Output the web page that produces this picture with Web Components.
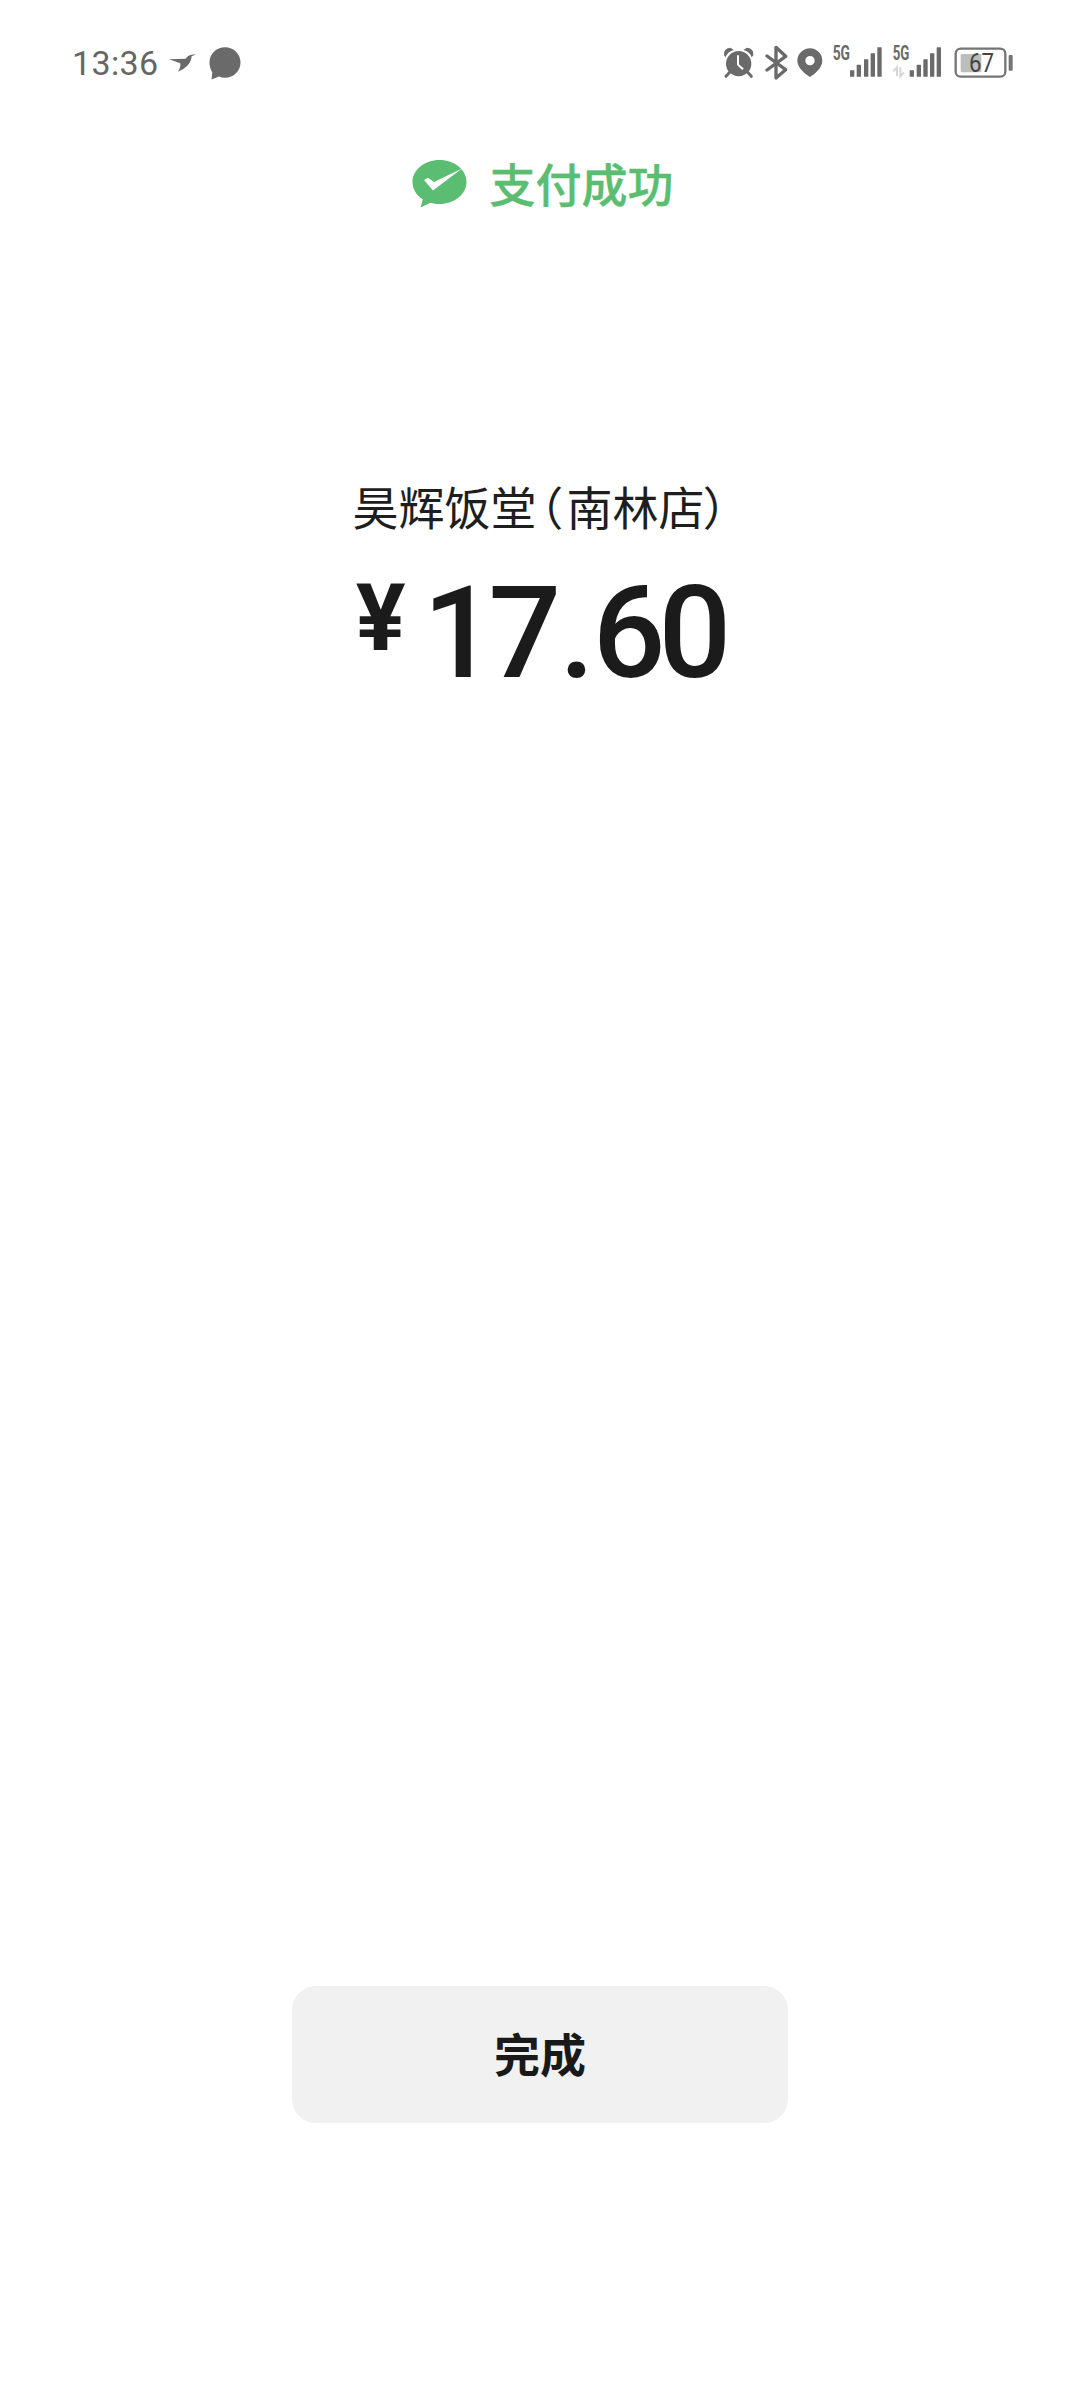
<!DOCTYPE html>
<html lang="zh"><head><meta charset="utf-8"><title>支付成功</title>
<style>html,body{margin:0;padding:0;background:#fff}body{width:1080px;height:2382px;overflow:hidden;font-family:"Noto Sans CJK SC","Noto Sans",sans-serif}</style>
</head><body>
<pay-page>
  <status-bar slot="status"></status-bar>
  <pay-title slot="title">支付成功</pay-title>
  <pay-amount slot="amount" merchant="昊辉饭堂" branch="南林店" whole="17" cents="60"></pay-amount>
  <done-button slot="action">完成</done-button>
</pay-page>
<script>
function def(name, html, init){
  customElements.define(name, class extends HTMLElement{
    constructor(){super();this.attachShadow({mode:'open'}).innerHTML=html;}
    connectedCallback(){ if(init) init(this); }
  });
}
def('pay-page',`<style>:host{display:flex;flex-direction:column;width:1080px;height:2382px;background:#fff}
.grow{flex:1}</style>
<slot name="status"></slot><slot name="title"></slot><slot name="amount"></slot><div class="grow"></div><slot name="action"></slot>`);

const ic=(x0,w,body)=>`<svg width="${w/3}" height="46" viewBox="${x0} 30 ${w} 138" fill="#6a6a6a">${body}</svg>`;
const bars=(xs,ys)=>xs.map((x,i)=>`<rect x="${x}" y="${ys[i]}" width="13" height="${140-ys[i]}" rx="1.5"/>`).join('');
def('status-bar',`<style>:host{display:flex;align-items:center;height:36px;margin-top:45px;padding:0 66px 0 72px;color:#666}
.time{font:400 34px/36px Roboto,sans-serif;width:85.5px;letter-spacing:.35px;color:#666;white-space:nowrap}
svg{display:block;flex:none}
.bird{margin-left:11px}.bub{margin-left:10px}
.sp{flex:1}
</style>
<span class="time">13:36</span>
<svg class="bird" width="30" height="36" viewBox="0 0 90 108" fill="#6a6a6a"><path d="M0 43Q30 42 50 41Q56 30 68 29L82 28L68 34Q66 52 54 63Q42 75 27 80Q36 66 34 55Q20 50 0 43Z"/></svg>
<svg class="bub" width="32" height="36" viewBox="0 0 32 36" fill="#6a6a6a"><path d="M16 2.300C24.700 2.300 31.500 9 31.500 17.500C31.500 26 24.700 32.800 16 32.800C13.800 32.800 11.900 32.400 10 31.600L2.500 34.400L3.300 27.200C1.500 24.700.5 21.300.5 17.500C.5 9 7.300 2.300 16 2.300Z"/></svg>
<div class="sp"></div>
${ic(68,96,`<circle cx="115" cy="101" r="38"/><path d="M71 76Q68 56 90 53L101 60Q82 64 76 82ZM159 76Q162 56 140 53L129 60Q148 64 154 82Z"/><path d="M88 127L77 139M142 127L153 139" stroke="#6a6a6a" stroke-width="9" stroke-linecap="round"/><path d="M113 76V104L128 118" fill="none" stroke="#fff" stroke-width="6"/>`)}
<div style="width:10px"></div>
${ic(196,70,`<path d="M202 78L258 119L229 144V52L258 79L202 120" fill="none" stroke="#6a6a6a" stroke-width="10" stroke-linejoin="round" stroke-linecap="round"/>`)}
<div style="width:9px"></div>
${ic(294,78,`<path fill-rule="evenodd" d="M333 55C354 55 370 72 370 92C370 112 350 130 333 141C316 130 295 112 295 92C295 72 312 55 333 55ZM333 78A14 14 0 1 0 333 106A14 14 0 1 0 333 78Z"/>`)}
<div style="width:8.700px"></div>
${ic(396,152,`<text x="398" y="90" font-family="Roboto,sans-serif" font-weight="700" font-size="58" textLength="52" lengthAdjust="spacingAndGlyphs">5G</text>`+bars([450,470,492,512,532],[121,104,88,70,52]))}
<div style="width:9.500px"></div>
${ic(575,150,`<text x="577" y="90" font-family="Roboto,sans-serif" font-weight="700" font-size="58" textLength="50" lengthAdjust="spacingAndGlyphs">5G</text><path d="M590 139V112L579 124M600 112V139L611 127" fill="none" stroke="#d6d6d6" stroke-width="6"/>`+bars([628,649,669,689,709],[121,104,88,70,52]))}
<div style="width:12px"></div>
${ic(758,180,`<rect x="778" y="72" width="62" height="55" rx="4" fill="#bdbdbd"/><rect x="763" y="56" width="149" height="84" rx="15" fill="none" stroke="#757575" stroke-width="7"/><rect x="922" y="75" width="12" height="47" rx="3" fill="#757575"/><text x="803" y="127" font-family="Roboto,sans-serif" font-weight="400" font-size="78" fill="#444" textLength="75" lengthAdjust="spacingAndGlyphs">67</text>`)}
`);

def('pay-title',`<style>:host{display:flex;justify-content:center;align-items:center;gap:23px;margin-top:73px;height:56px;padding-left:5px;
font:500 46px/56px "Noto Sans CJK SC",sans-serif;color:#5bbd72;-webkit-text-stroke:.4px #5bbd72}
svg{display:block;flex:none}</style>
<svg width="55" height="52" viewBox="0 0 55 52" style="margin-top:6px"><path fill="#5bbd72" d="M27.500 1C42.500 1 54.500 10.800 54.500 23C54.500 35.200 42.500 45 27.500 45C24.300 45 21.300 44.600 18.500 43.700L8.600 48.500L10.700 40.300C4.500 36.300.5 30 .5 23C.5 10.800 12.500 1 27.500 1Z"/><path fill="#fff" d="M12 21L16 18.700L22 23L50 9.500L21 31.500Z"/></svg>
<span><slot></slot></span>`);

def('pay-amount',`<style>:host{display:block;color:#1b1b1b;font-family:"Noto Sans CJK SC",sans-serif}
.m{display:flex;justify-content:center;margin-top:265px;height:60px;font-size:46px;line-height:60px;font-weight:400;color:#1e1e1e}
.p{font-feature-settings:"palt" 1}
.p1{margin-left:2px;margin-right:5px}.p2{margin-left:0}
.a{display:flex;justify-content:center;align-items:flex-start;margin-top:38px;height:120px;font-family:Roboto,sans-serif;color:#1b1b1b}
.y{font-size:93px;line-height:90px;font-weight:700;margin-top:1px;margin-right:17px}
.n{font-size:128px;line-height:120px;font-weight:500;letter-spacing:-7px}
.d{margin:0 5px}</style>
<div class="m"><span id="mn"></span><span class="p p1">（</span><span id="br"></span><span class="p p2">）</span></div>
<div class="a"><span class="y">¥</span><span class="n"><span id="w"></span><span class="d">.</span><span id="c"></span></span></div>`,
 el=>{const s=el.shadowRoot;s.getElementById('mn').textContent=el.getAttribute('merchant');s.getElementById('br').textContent=el.getAttribute('branch');s.getElementById('w').textContent=el.getAttribute('whole');s.getElementById('c').textContent=el.getAttribute('cents');});

def('done-button',`<style>:host{display:flex;align-items:center;justify-content:center;box-sizing:border-box;width:496px;height:137px;margin:0 auto 259px;border-radius:24px;background:#f1f1f1;color:#191919;font:700 46px/60px "Noto Sans CJK SC",sans-serif;padding-bottom:5px}</style><slot></slot>`);
</script>
</body></html>
